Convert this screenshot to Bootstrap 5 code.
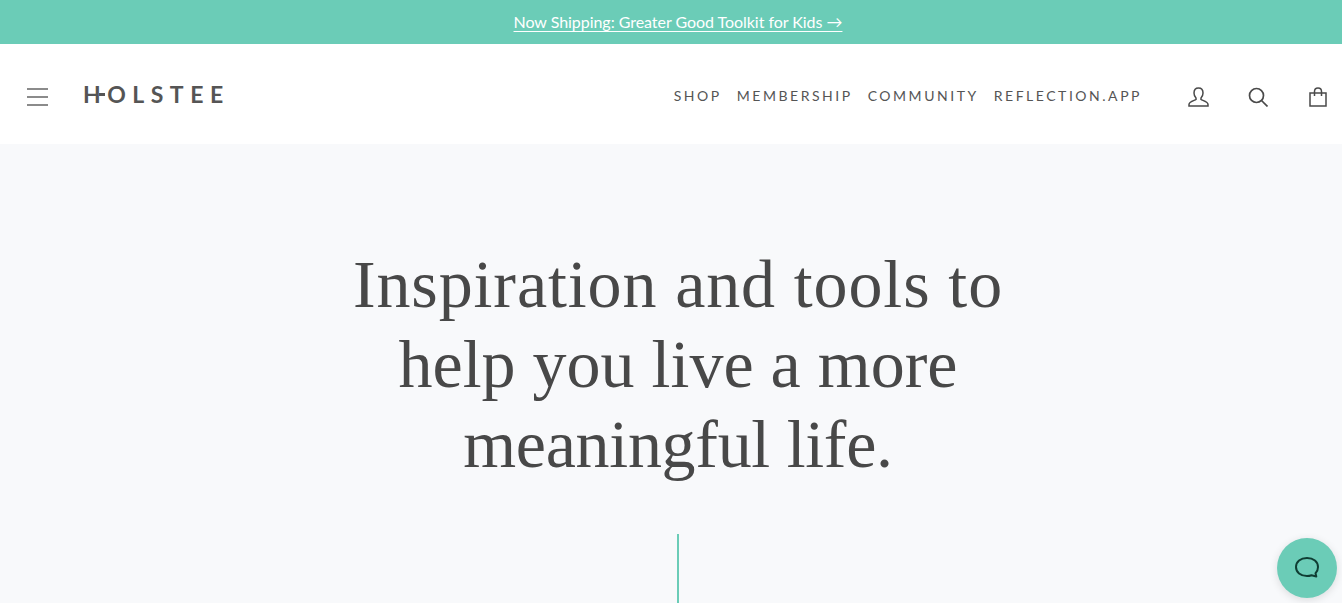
<!DOCTYPE html>
<html lang="en">
<head>
    <meta charset="UTF-8">
    <meta name="viewport" content="width=device-width, initial-scale=1">
    <title>Holstee</title>
    <link href="https://cdn.jsdelivr.net/npm/bootstrap@5.3.2/dist/css/bootstrap.min.css" rel="stylesheet">
    <script src="https://cdn.jsdelivr.net/npm/bootstrap@5.3.2/dist/js/bootstrap.bundle.min.js"></script>
    <style>
        html, body { height: 603px; overflow: hidden; }
        body { background: #f8f9fb; font-family: Lato, sans-serif; color: #4a4a4a; }
        .promo-bar { height: 44px; background: #6bccb7; font-size: 16px; padding-left: 14px; letter-spacing: -.04px; }
        .promo-bar a { color: #fff; text-underline-offset: 3px; text-decoration-thickness: 1px; }
        .main-head { height: 100px; padding: 5px 15px 0 27px; }
        .brand-logo { position: relative; margin-left: 35px; margin-bottom: 4px; font-size: 23px; font-weight: 700; letter-spacing: 6.5px; color: #555; line-height: 1; }
        .brand-logo::after { content: ""; position: absolute; left: 16px; top: 10px; width: 6px; height: 3px; background: #555; }
        .main-links { gap: 15px; margin-right: 46px; margin-bottom: 3px; }
        .main-links a { color: #555; font-size: 14px; letter-spacing: 2.53px; text-decoration: none; }
        .head-icons { gap: 39px; }
        .head-icons svg:last-child { margin-left: 2px; }
        main { padding-left: 14px; }
        .hero-title { margin: 0; padding-top: 100px; font-family: "Liberation Serif", serif; font-size: 68px; line-height: 80px; font-weight: 400; color: #484848; }
        .hero-l1 { letter-spacing: .88px; }
        .hero-l3 { letter-spacing: -.3px; }
        .hero-line { width: 2px; height: 70px; background: #6bccb7; margin: 50px auto 0; }
        .chat-btn { position: fixed; right: 5px; bottom: 5px; width: 60px; height: 60px; background: #6bccb7; box-shadow: 0 2px 8px rgba(0,0,0,.12); }
    </style>
</head>
<body>

    <div class="promo-bar d-flex align-items-center justify-content-center">
        <a href="#">Now Shipping: Greater Good Toolkit for Kids →</a>
    </div>

    <header class="main-head bg-white d-flex align-items-center">
        <svg width="21" height="18" viewBox="0 0 21 18" fill="none" stroke="#666" stroke-width="1.600"><path d="M0 1h21M0 9h21M0 17h21"/></svg>
        <a class="brand-logo text-decoration-none" href="#">HOLSTEE</a>
        <nav class="main-links d-flex ms-auto">
            <a href="#">SHOP</a>
            <a href="#">MEMBERSHIP</a>
            <a href="#">COMMUNITY</a>
            <a href="#">REFLECTION.APP</a>
        </nav>
        <div class="head-icons d-flex align-items-center">
            <svg width="21" height="20" viewBox="0 0 21 20" fill="none" stroke="#4a4a4a" stroke-width="1.500"><path d="M10.500 1c-3 0-4.500 2-4.500 5 0 2.500 1 4 2 5v1.500c-1.500 1-7 2-7 5V19h19v-1.500c0-3-5.500-4-7-5V11c1-1 2-2.500 2-5 0-3-1.500-5-4.500-5z"/></svg>
            <svg width="20" height="20" viewBox="0 0 20 20" fill="none" stroke="#4a4a4a" stroke-width="1.700"><circle cx="8.500" cy="8.500" r="7"/><path d="M13.500 13.500l6 6"/></svg>
            <svg width="18" height="20" viewBox="0 0 18 20" fill="none" stroke="#4a4a4a" stroke-width="1.500"><path d="M1 6h16v13H1zM5.500 9V4.500C5.500 2.500 7 1 9 1s3.500 1.500 3.500 3.500V9"/></svg>
        </div>
    </header>

    <main class="text-center">
        <h1 class="hero-title"><span class="hero-l1 d-block">Inspiration and tools to</span><span class="d-block">help you live a more</span><span class="hero-l3 d-block">meaningful life.</span></h1>
        <div class="hero-line"></div>
    </main>

    <div class="chat-btn rounded-circle d-flex align-items-center justify-content-center">
        <svg width="26" height="24" viewBox="0 0 26 24" fill="none" stroke="#0f3d33" stroke-width="2" stroke-linejoin="round"><path d="M13 2c6.500 0 11 3.700 11 9 0 2.700-1 4.800-2.500 6.200l.8 3.300-4.800-1.300c-1.400.5-2.900.8-4.500.8-6.500 0-11-3.700-11-9s4.500-9 11-9z"/></svg>
    </div>

</body>
</html>
